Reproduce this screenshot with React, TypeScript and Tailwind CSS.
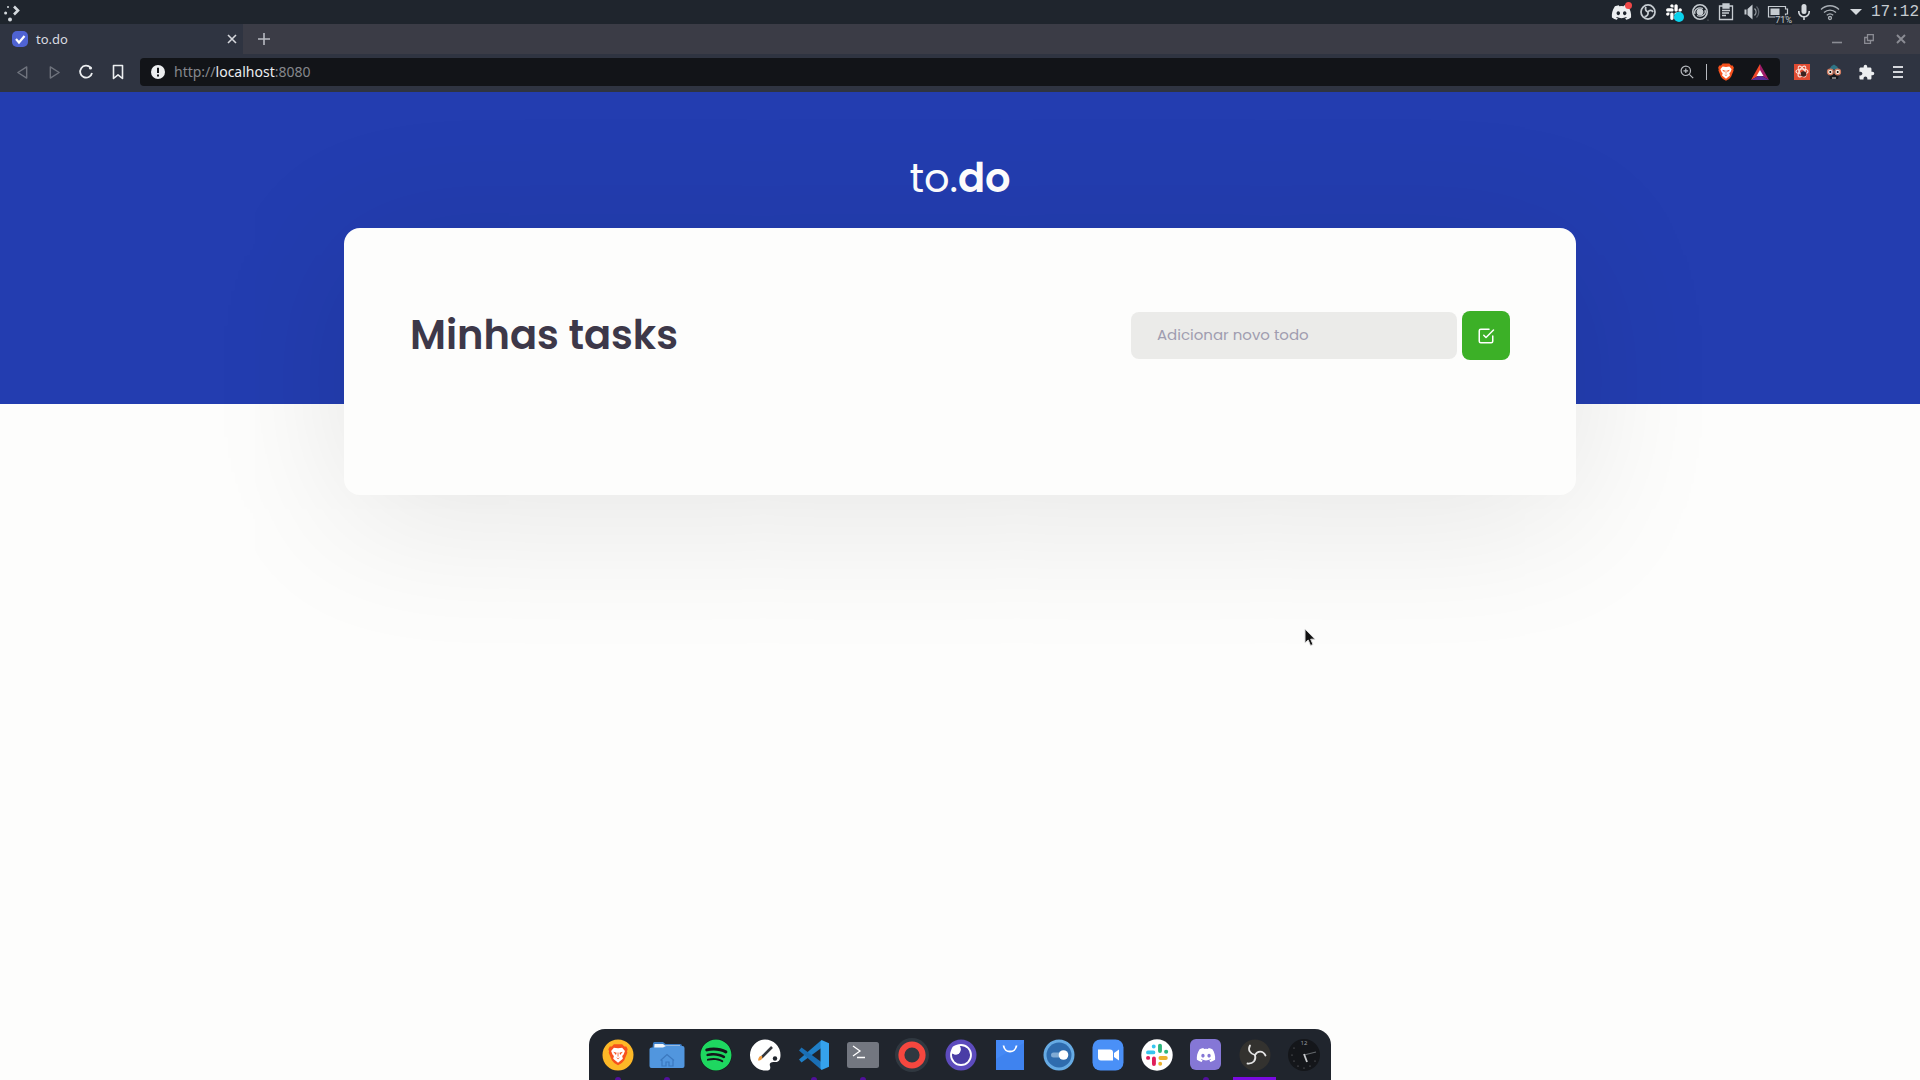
import type { ReactNode } from "react";
import { FaDiscord, FaSlack, FaSpotify } from "react-icons/fa";
import { FiCheckSquare } from "react-icons/fi";
import { MdExtension } from "react-icons/md";

function ObsSwirl() {
  return (
    <g fill="none" stroke="currentColor" strokeWidth="1.800" strokeLinecap="round">
      <path d="M16 16C11 14.500 8.500 11 11 6.500" />
      <path d="M16 16C18.500 11.500 24 11.500 26.500 16.500" />
      <path d="M16 16C17.500 21.500 14 25 8.500 24.500" />
    </g>
  );
}

function BraveLion() {
  return (
    <>
      <path d="M10 1h12l3 3.500 3-.2 2 4-1 3 .5 2-4.500 11-3.500 4L16 31.500l-5.500-3.200-3.500-4-4.500-11 .5-2-1-3 2-4 3 .2z" fill="#f6511d" />
      <path d="M16 7l6-1 4 5-2 5-2 2 1 4-7 6-7-6 1-4-2-2-2-5 4-5z" fill="#fff" />
      <path d="M9 12l5 1.500-1 3zM23 12l-5 1.500 1 3zM13 20l3 1.500L19 20l-3 3z" fill="#f6511d" />
      <path d="M16 13v6" stroke="#f6511d" strokeWidth="1.200" />
    </>
  );
}

function SlackMark() {
  return (
    <g strokeWidth="3.600" strokeLinecap="round" fill="none">
      <path d="M7.500 13.800h5M12.800 8.200v.2" stroke="#36c5f0" />
      <path d="M18.600 7.500v5M24.200 13.200h.2" stroke="#2eb67d" />
      <path d="M19 19h5M18.800 24.200v.2" stroke="#ecb22e" />
      <path d="M13 19.500v5M7.500 18.900h.2" stroke="#e01e5a" />
    </g>
  );
}

function Launcher() {
  return (
    <svg viewBox="0 0 18 18" className="h-[18px] w-[18px]" aria-hidden="true">
      <path d="M10 1.500l4 4-4 4" fill="none" stroke="#d5dade" strokeWidth="2.600" />
      <g fill="#d5dade">
        <circle cx="4" cy="2" r="1" />
        <circle cx="1.600" cy="8" r="1.500" />
        <circle cx="6" cy="14.500" r="2" />
      </g>
    </svg>
  );
}

const trayIcons: { name: string; icon: ReactNode }[] = [
  {
    name: "Discord",
    icon: (
      <span className="relative block">
        <FaDiscord className="h-[21px] w-[21px] text-[#eceef0]" />
        <span className="absolute right-0 top-0 h-[7px] w-[7px] rounded-full bg-[#f04747]" />
      </span>
    ),
  },
  {
    name: "OBS",
    icon: (
      <svg viewBox="0 0 32 32" className="h-4 w-4 text-[#c6ccd1]">
        <circle cx="16" cy="16" r="14" fill="none" stroke="currentColor" strokeWidth="3.500" />
        <path d="M16 16C11 14 10 10 12 6M16 16c3-5 8-4 10 0M16 16c1 5-2 9-7 9" fill="none" stroke="currentColor" strokeWidth="3.500" />
      </svg>
    ),
  },
  {
    name: "Slack",
    icon: (
      <span className="relative block">
        <FaSlack className="h-[18px] w-[18px] text-white" />
        <span className="absolute -bottom-px -right-px h-[10px] w-[10px] rounded-full bg-[#0bd3ee]" />
      </span>
    ),
  },
  {
    name: "Sync",
    icon: (
      <svg viewBox="0 0 18 18" className="h-[18px] w-[18px]" fill="none" stroke="#c6ccd1">
        <circle cx="9" cy="9" r="7.200" strokeWidth="1.600" />
        <circle cx="9" cy="9" r="3" fill="#c6ccd1" strokeWidth="1" />
        <path d="M4 11C2.500 7 7 3.500 12 5.500M14 7c1.500 4-3 7.500-8 5.500" strokeWidth="1.300" />
        <circle cx="17" cy="17" r=".6" fill="#888" stroke="none" />
      </svg>
    ),
  },
  {
    name: "Clipboard",
    icon: (
      <svg viewBox="0 0 16 18" className="h-[18px] w-4" fill="none" stroke="#c6ccd1" strokeWidth="1.300">
        <path d="M1.500 3h13v13.500h-13z" />
        <path d="M5 1h6v4H5z" fill="#c6ccd1" />
        <path d="M4 7.500h8M4 10h7M4 12.500h4" />
      </svg>
    ),
  },
  {
    name: "Volume",
    icon: (
      <svg viewBox="0 0 18 18" className="h-[18px] w-[18px]" fill="none">
        <path d="M1.500 6.500h2v5h-2zM4.500 6l5-4.500v15l-5-4.500z" fill="#c6ccd1" />
        <path d="M11.500 5.500c2 2 2 5 0 7" stroke="#9da3a8" strokeWidth="1.300" />
        <path d="M13.500 3.500c3 3 3 8 0 11" stroke="#5d636b" strokeWidth="1.300" />
      </svg>
    ),
  },
  {
    name: "Battery",
    icon: (
      <span className="relative block">
        <svg viewBox="0 0 22 18" className="h-[18px] w-[22px]" fill="none">
          <path d="M1.500 3.500h17v2.500h2v5h-2v3h-17z" stroke="#c6ccd1" strokeWidth="1.200" />
          <path d="M3.500 5.500h9v6.500h-9z" fill="#c6ccd1" />
        </svg>
        <span className="absolute -right-[3px] -bottom-1 bg-[#20252d]/70 font-['Roboto',sans-serif] text-[9px] leading-[10px] text-[#c0c5ca]">71%</span>
      </span>
    ),
  },
  {
    name: "Microphone",
    icon: (
      <svg viewBox="0 0 16 18" className="h-[18px] w-4" fill="none" stroke="#d5dade">
        <rect x="5.500" y="1" width="5" height="10" rx="2.500" fill="#d5dade" stroke="none" />
        <path d="M2.800 8v1a5.200 4.700 0 0 0 10.400 0V8M8 14v3" strokeWidth="1.600" />
      </svg>
    ),
  },
  {
    name: "Wi-Fi",
    icon: (
      <svg viewBox="0 0 20 18" className="h-[18px] w-5" fill="none" stroke="#aab0b6" strokeWidth="1.300">
        <path d="M1 6.500c5-5 13-5 18 0M4 9.500c3.500-3.300 8.500-3.300 12 0M6.800 12.300c2-1.700 4.400-1.700 6.400 0" />
        <circle cx="10" cy="15" r="1.500" />
      </svg>
    ),
  },
  {
    name: "Show more",
    icon: (
      <svg viewBox="0 0 12 8" className="h-2 w-3">
        <path d="M0 1h12L6 7z" fill="#d5dade" />
      </svg>
    ),
  },
];

function SystemBar() {
  return (
    <header className="flex h-6 items-center justify-between bg-[#1f252d] pl-1">
      <button type="button" aria-label="Applications" className="pt-1">
        <Launcher />
      </button>
      <div className="flex items-center pr-px">
        {trayIcons.map((item) => (
          <button key={item.name} type="button" aria-label={item.name} className="flex h-6 w-[26px] items-center justify-center">
            {item.icon}
          </button>
        ))}
        <time className="pl-[2px] font-['Liberation_Mono',monospace] text-[16px] leading-6 text-[#c6ccd1]">17:12</time>
      </div>
    </header>
  );
}

function TabStrip() {
  return (
    <div className="flex h-[30px] items-center justify-between bg-[#3b3c46]">
      <div className="flex h-full items-center">
        <div className="flex h-full w-[243px] items-center gap-2 bg-[#2f3441] pl-3 pr-[6px]">
          <svg viewBox="0 0 16 16" className="h-4 w-4" aria-hidden="true">
            <rect width="16" height="16" rx="5" fill="#4f63d2" />
            <path d="M4 8l3 3.500L12.500 5" fill="none" stroke="#fff" strokeWidth="2.200" />
          </svg>
          <span className="flex-1 pt-px text-[13px] text-[#d9dbe0]">to.do</span>
          <button type="button" aria-label="Close tab" className="flex h-5 w-[11px] items-center justify-center">
            <svg viewBox="0 0 10 10" className="h-[10px] w-[10px]" stroke="#d5d7dc" strokeWidth="1.600"><path d="M1 1l8 8M9 1L1 9" /></svg>
          </button>
        </div>
        <button type="button" aria-label="New tab" className="flex h-5 w-[42px] items-center justify-center">
          <svg viewBox="0 0 12 12" className="h-3 w-3" stroke="#b9bbc2" strokeWidth="1.600"><path d="M6 0v12M0 6h12" /></svg>
        </button>
      </div>
      <div className="flex items-center pr-[3px] text-[#8b8c94]">
        <button type="button" aria-label="Minimize" className="flex h-5 w-8 items-center justify-center">
          <svg viewBox="0 0 10 10" className="h-[10px] w-[10px]" stroke="currentColor" strokeWidth="1.600"><path d="M0 8.500h10" /></svg>
        </button>
        <button type="button" aria-label="Restore" className="flex h-5 w-8 items-center justify-center">
          <svg viewBox="0 0 10 10" className="h-[10px] w-[10px]" fill="none" stroke="currentColor" strokeWidth="1.300"><path d="M3.500.7h5.800v5.800H3.500zM3.500 3.500H.7v5.800h5.800V6.500" /></svg>
        </button>
        <button type="button" aria-label="Close window" className="flex h-5 w-8 items-center justify-center">
          <svg viewBox="0 0 10 10" className="h-[10px] w-[10px]" stroke="currentColor" strokeWidth="1.900"><path d="M1 1l8 8M9 1L1 9" /></svg>
        </button>
      </div>
    </div>
  );
}

const navButton = "flex h-7 w-8 shrink-0 items-center justify-center";

function Toolbar() {
  return (
    <div className="flex h-[38px] items-center bg-[#2f3441] px-[6px] pb-[2px]">
      <button type="button" aria-label="Back" className={navButton}>
        <svg viewBox="0 0 14 16" className="h-[15px] w-[13px]" fill="none" stroke="#6f737d" strokeWidth="1.500" strokeLinejoin="round"><path d="M11.500 2v12L2 8z" /></svg>
      </button>
      <button type="button" aria-label="Forward" className={navButton}>
        <svg viewBox="0 0 14 16" className="h-[15px] w-[13px]" fill="none" stroke="#6f737d" strokeWidth="1.500" strokeLinejoin="round"><path d="M2.500 2v12L12 8z" /></svg>
      </button>
      <button type="button" aria-label="Reload" className={navButton}>
        <svg viewBox="0 0 16 16" className="h-4 w-4" fill="none" stroke="#eceef0" strokeWidth="1.800">
          <path d="M12.500 3.500A6 6 0 1 0 14 9" />
          <circle cx="12.500" cy="4" r="1.600" fill="#eceef0" stroke="none" />
        </svg>
      </button>
      <button type="button" aria-label="Bookmark" className={navButton}>
        <svg viewBox="0 0 12 16" className="h-4 w-3" fill="none" stroke="#eceef0" strokeWidth="1.600" strokeLinejoin="round"><path d="M1.500 1.500h9v13L6 10.800l-4.500 3.700z" /></svg>
      </button>
      <div className="ml-[6px] flex h-7 flex-1 items-center rounded bg-[#121418] pl-[11px]">
        <svg viewBox="0 0 14 14" className="h-[14px] w-[14px]" aria-hidden="true">
          <circle cx="7" cy="7" r="7" fill="#eceef0" />
          <path d="M7 2.800v5.200M7 9.500v2" stroke="#121418" strokeWidth="2" />
        </svg>
        <a href="http://localhost:8080" className="ml-[9px] flex-1 text-[14px] leading-7 text-[#85878c]">
          http://<span className="text-[#eceef0]">localhost</span>:8080
        </a>
        <button type="button" aria-label="Zoom" className="flex h-7 w-[26px] items-center justify-center">
          <svg viewBox="0 0 14 14" className="h-[14px] w-[14px]" fill="none" stroke="#b7babf" strokeWidth="1.200">
            <circle cx="5.800" cy="5.800" r="4.700" /><path d="M9.300 9.300L13.200 13.200M3.500 5.800h4.600M5.800 3.500v4.600" />
          </svg>
        </button>
        <span className="mx-[6px] h-4 w-px bg-[#b7babf]" />
        <button type="button" aria-label="Brave Shields" className="flex h-7 w-[26px] items-center justify-center">
          <svg viewBox="0 0 32 32" className="h-[18px] w-[18px]"><BraveLion /></svg>
        </button>
        <span className="w-[5px]" />
        <button type="button" aria-label="Brave Rewards" className="mr-1 flex h-7 w-8 items-center justify-center">
          <svg viewBox="0 0 18 16" className="h-4 w-[18px]">
            <path d="M9 0L0 16l9-5z" fill="#f0472c" /><path d="M9 0l9 16-9-5z" fill="#a01c6a" /><path d="M0 16h18l-9-5z" fill="#5b2d9a" /><path d="M9 6l3.500 6h-7z" fill="#fff" />
          </svg>
        </button>
      </div>
      <div className="ml-[6px] flex">
        <button type="button" aria-label="Red extension" className={navButton}>
          <svg viewBox="0 0 16 16" className="h-4 w-4" fill="none">
            <rect width="16" height="16" fill="#e04b32" />
            <g stroke="#fbe3dc" strokeWidth="1.200"><ellipse cx="8" cy="7.500" rx="6" ry="2.500" /><ellipse cx="8" cy="7.500" rx="6" ry="2.500" transform="rotate(60 8 7.500)" /><ellipse cx="8" cy="7.500" rx="6" ry="2.500" transform="rotate(120 8 7.500)" /></g>
            <circle cx="9.500" cy="10" r="2.800" fill="#3a2320" />
          </svg>
        </button>
        <button type="button" aria-label="Glasses extension" className={navButton}>
          <svg viewBox="0 0 16 16" className="h-4 w-4">
            <path d="M3 5.500L5.500 2 8 .5 11 2.500l2 3z" fill="#2f7485" /><path d="M3 10h10l-1 5H4z" fill="#15181d" />
            <g fill="#f7eee6" stroke="#cf7a5f" strokeWidth="1.300"><circle cx="4.300" cy="8" r="2.800" /><circle cx="11.700" cy="8" r="2.800" /></g>
            <circle cx="4.300" cy="8" r="1" /><circle cx="11.700" cy="8" r="1" /><path d="M6 14h4" stroke="#e5e5e5" />
          </svg>
        </button>
        <button type="button" aria-label="Extensions" className={navButton}>
          <MdExtension className="h-[17px] w-[17px] text-[#eceef0]" />
        </button>
        <button type="button" aria-label="Menu" className={navButton}>
          <svg viewBox="0 0 10 12" className="h-3 w-[10px]" stroke="#d5d7dc" strokeWidth="1.800"><path d="M0 1h10M0 6h10M0 11h10" /></svg>
        </button>
      </div>
    </div>
  );
}

type DockItem = { name: string; icon: ReactNode; state?: "open" | "active" };
const art = "h-8 w-8";

const dockItems: DockItem[] = [
  {
    name: "Brave", state: "open",
    icon: <svg viewBox="0 0 32 32" className={art}><circle cx="16" cy="16" r="15.500" fill="#fdb827" /><g transform="translate(5 4.500) scale(.69)"><BraveLion /></g></svg>,
  },
  {
    name: "Files", state: "open",
    icon: (
      <svg viewBox="0 0 36 32" className="h-8 w-9">
        <path d="M4 4.500Q4 3 5.500 3H14l2.500 2H31q2 0 2 2v6H3z" fill="#3b7cc4" />
        <path d="M5.500 5H14l2 1.500h15V12h-26z" fill="#f2f6fa" />
        <path d="M.5 10.500Q.5 8.500 2.500 8.500H14L17 7h16.500q2 0 2 2v18q0 2-2 2h-31q-2 0-2-2z" fill="#5196de" />
        <path d="M13 21v6h4v-4h3v4h4v-6M11.500 21.500l6.500-6 7 6" fill="none" stroke="#3b78be" strokeWidth="1.200" />
      </svg>
    ),
  },
  {
    name: "Spotify",
    icon: <span className="flex h-8 w-8 items-center justify-center rounded-full bg-[#14161a]"><FaSpotify className="h-8 w-8 text-[#1ed760]" /></span>,
  },
  {
    name: "Paint",
    icon: (
      <svg viewBox="0 0 32 32" className={art}>
        <path d="M16 .5A15.500 15.500 0 1 0 17 31.500c3.500 0 5-1.500 4-4.500-1-3 1-4.500 5-4 3.500.5 5.500-2 5.500-7A15.500 15.500 0 0 0 16 .5z" fill="#fff" />
        <circle cx="26" cy="19.500" r="2.200" fill="#20252d" />
        <path d="M12.500 18.500L23 8" stroke="#33363c" strokeWidth="2.600" />
        <path d="M9 21.500c.5-4 2-5 4-4.500 1 2.500-.5 4.500-4 4.500z" fill="#f09a3e" />
      </svg>
    ),
  },
  {
    name: "Visual Studio Code", state: "open",
    icon: (
      <svg viewBox="0 0 32 32" className={art}>
        <path d="M23.500 1L1 20.500l2.500 3L24 8.500z" fill="#1f7fc7" />
        <path d="M23.500 31L1 11.500l2.500-3L24 23.500z" fill="#1a6fb5" />
        <path d="M23.500 1L31 4.300v23.400L23.500 31l-1-2V3z" fill="#35a2ec" />
      </svg>
    ),
  },
  {
    name: "Terminal", state: "open",
    icon: (
      <svg viewBox="0 0 32 32" className={art}>
        <rect x="0" y="3" width="32" height="26" rx="2.500" fill="#737780" />
        <path d="M6 7l7 5-7 5M10 18.500h8" fill="none" stroke="#fff" strokeWidth="1.300" />
      </svg>
    ),
  },
  {
    name: "Recorder",
    icon: <svg viewBox="0 0 34 34" className="h-[34px] w-[34px]"><circle cx="17" cy="17" r="17" fill="#303840" /><circle cx="17" cy="17" r="10.600" fill="none" stroke="#f6473f" strokeWidth="6" /></svg>,
  },
  {
    name: "Insomnia",
    icon: (
      <svg viewBox="0 0 32 32" className={art}>
        <circle cx="16" cy="16" r="15.500" fill="#5d4bbd" />
        <circle cx="16" cy="16" r="10" fill="#4a3da6" stroke="#fff" strokeWidth="1.800" />
        <path d="M14.500 6.500a5 5 0 0 1-8.500 7c1-3.500 4-6.500 8.500-7z" fill="#fff" />
        <circle cx="11" cy="11" r="4.500" fill="#fff" />
      </svg>
    ),
  },
  {
    name: "Store",
    icon: <svg viewBox="0 0 32 32" className={art}><path d="M2 1h28v30H2z" fill="#4589f5" /><path d="M2 20l28-16v27H2z" fill="#397de9" opacity=".5" /><path d="M9.500 6.500c1 8 12 8 13 0" fill="none" stroke="#fff" strokeWidth="1.800" /></svg>,
  },
  {
    name: "Settings",
    icon: <svg viewBox="0 0 32 32" className={art}><circle cx="16" cy="16" r="15.500" fill="#66abe4" /><circle cx="16" cy="16" r="12.500" fill="#2f6cae" /><path d="M10.500 16h9" stroke="#7faad4" strokeWidth="5" strokeLinecap="round" /><circle cx="20.500" cy="16" r="4.800" fill="#fff" /></svg>,
  },
  {
    name: "Zoom",
    icon: <svg viewBox="0 0 32 32" className={art}><rect x=".5" y=".5" width="31" height="31" rx="8" fill="#4a90f7" /><path d="M6 10.500h12q3 0 3 3v8H9q-3 0-3-3zM22 14l5-3.500v11L22 18z" fill="#fff" /></svg>,
  },
  {
    name: "Slack",
    icon: <svg viewBox="0 0 32 32" className={art}><circle cx="16" cy="16" r="15.700" fill="#fff" /><g transform="translate(-1.100 -1.500) scale(1.080)"><SlackMark /></g></svg>,
  },
  {
    name: "Discord", state: "open",
    icon: <span className="flex h-[31px] w-[31px] items-center justify-center rounded-md bg-[#8577d6]"><FaDiscord className="h-5 w-5 text-white" /></span>,
  },
  {
    name: "OBS Studio", state: "active",
    icon: <svg viewBox="0 0 32 32" className="h-8 w-8 text-[#e4e4e4]"><circle cx="16" cy="16" r="15.500" fill="#33322f" /><ObsSwirl /></svg>,
  },
  {
    name: "Clock",
    icon: (
      <svg viewBox="0 0 32 32" className={art}>
        <circle cx="16" cy="16" r="16" fill="#14161a" />
        <text x="16" y="6" textAnchor="middle" className="font-['Noto_Sans',sans-serif] text-[6px]" fill="#9a9ca0">12</text>
        <path d="M16 16l12-3" stroke="#65686d" strokeWidth="1.200" /><path d="M16 15l3 8" stroke="#c7c9cc" strokeWidth="1.800" />
        <g fill="#7b7d80"><circle cx="4" cy="16" r=".6" /><circle cx="6" cy="22" r=".6" /><circle cx="10" cy="27" r=".6" /><circle cx="16" cy="29" r=".6" /><circle cx="22" cy="27" r=".6" /><circle cx="27" cy="22" r=".6" /><circle cx="6" cy="9" r=".6" /></g>
      </svg>
    ),
  },
];

function Dock() {
  return (
    <nav aria-label="Dock" className="flex rounded-t-2xl bg-[#20252d] pr-[3px] pl-1">
      {dockItems.map((item) => (
        <button key={item.name} type="button" aria-label={item.name} className="relative flex h-[51px] w-[49px] items-center justify-center">
          {item.icon}
          {item.state === "open" && <span className="absolute bottom-0 h-[3px] w-[6px] rounded-t-full bg-[#51109a]" />}
          {item.state === "active" && <span className="absolute bottom-0 h-[3px] w-[43px] bg-[#7a0be0]" />}
        </button>
      ))}
    </nav>
  );
}

function TodoPage() {
  return (
    <>
      <header className="h-[312px] bg-[#233db0] pt-[61px]">
        <h1 className="text-center text-[40px] leading-[50px] font-normal text-white">
          to.<b className="font-semibold">do</b>
        </h1>
      </header>
      <main className="-mt-[176px] flex-1 px-8">
        <section className="mx-auto flex max-w-[1232px] items-center justify-between gap-8 rounded-2xl bg-[#fdfdfc] px-[66px] pt-[83px] pb-[135px] shadow-[0_20px_150px_rgba(0,0,0,0.1)]">
          <h2 className="text-[40px] leading-[49px] font-semibold text-[#3d3849]">Minhas tasks</h2>
          <form className="flex items-center gap-[5px]" onSubmit={(event) => event.preventDefault()}>
            <input
              type="text"
              aria-label="Adicionar novo todo"
              placeholder="Adicionar novo todo"
              className="h-[47px] w-[326px] rounded-lg bg-[#ebebe9] px-[26px] pb-[2px] text-[15px] text-[#3d3849] outline-none placeholder:text-[#a09db0]"
            />
            <button type="submit" aria-label="Adicionar" className="flex h-[49px] w-12 items-center justify-center rounded-lg bg-[#3cb027] text-white">
              <FiCheckSquare className="h-[18px] w-[18px]" />
            </button>
          </form>
        </section>
      </main>
    </>
  );
}

export default function App() {
  return (
    <div className="relative flex min-h-screen flex-col overflow-hidden bg-[#fdfdfc]">
      <div className="font-['Noto_Sans',sans-serif]">
        <SystemBar />
        <TabStrip />
        <Toolbar />
      </div>
      <div className="flex flex-1 flex-col font-['Poppins','Inter',sans-serif]">
        <TodoPage />
      </div>
      <footer className="flex justify-center">
        <Dock />
      </footer>
      <svg viewBox="0 0 12 19" className="absolute top-[628px] left-[1304px] h-[19px] w-3" aria-hidden="true">
        <path d="M1 1v14l3.200-3 2.300 5.500 2.500-1-2.300-5.300H11z" fill="#111" stroke="#ddd" strokeWidth="1" />
      </svg>
    </div>
  );
}
